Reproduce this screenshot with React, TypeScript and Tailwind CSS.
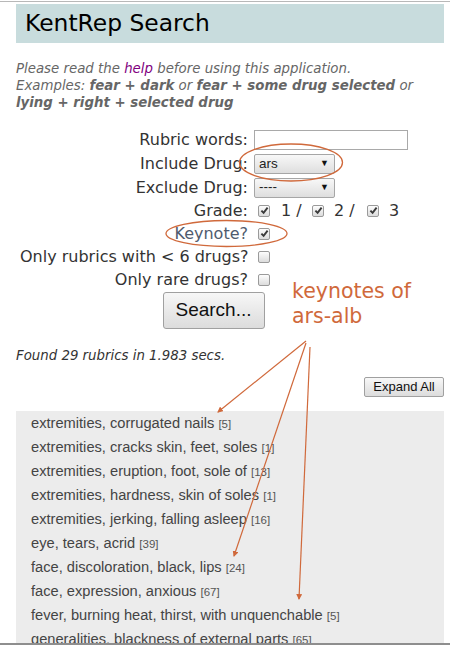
import React from "react";

const CB = ({ checked }: { checked?: boolean }) => (
  <span className="inline-flex w-[12px] h-[12px] shrink-0 items-center justify-center rounded-[2px] border border-[#9a9a9a] bg-linear-to-b from-[#fdfdfd] to-[#dcdcdc]">
    {checked && (
      <svg width="9" height="9" viewBox="0 0 9 9">
        <path d="M1.4 4.6 L3.6 6.9 L7.6 1.6" stroke="#3a3a3a" strokeWidth="1.9" fill="none" />
      </svg>
    )}
  </span>
);

const Select = ({ value }: { value: string }) => (
  <div className="flex h-[20px] w-[81px] items-center justify-between rounded-[2px] border border-[#a6a6a6] bg-linear-to-b from-[#f8f8f8] to-[#dedede] pl-[4px] pr-[5px] text-[13.5px] text-[#222] [font-family:'Liberation_Sans',Arial,sans-serif]">
    <span>{value}</span>
    <span className="text-[9px] text-[#111]">▼</span>
  </div>
);

const items: [string, string][] = [
  ["extremities, corrugated nails", "5"],
  ["extremities, cracks skin, feet, soles", "1"],
  ["extremities, eruption, foot, sole of", "13"],
  ["extremities, hardness, skin of soles", "1"],
  ["extremities, jerking, falling asleep", "16"],
  ["eye, tears, acrid", "39"],
  ["face, discoloration, black, lips", "24"],
  ["face, expression, anxious", "67"],
  ["fever, burning heat, thirst, with unquenchable", "5"],
  ["generalities, blackness of external parts", "65"],
];

export default function App() {
  const orange = "#d0693b";
  return (
    <div className="relative flex h-[646px] w-[450px] flex-col overflow-hidden bg-white [font-family:'DejaVu_Sans',Verdana,sans-serif]">
      <div className="mt-[1px] h-[1px] shrink-0 bg-[#b8b8b8]" />
      <div className="flex-1 overflow-hidden pl-4 pr-[6px] pt-[2px]">
        <div className="h-[39px] bg-[#c8dcdd] pl-[9px] text-[23.4px] leading-[39px] text-black">
          KentRep Search
        </div>
        <p className="mt-[17px] text-[13.33px] italic leading-[17px] text-[#666]">
          Please read the <span className="text-[#800080]">help</span> before using this application.
          <br />
          Examples: <b>fear + dark</b> or <b>fear + some drug selected</b> or <b>lying + right + selected drug</b>
        </p>

        <div className="mt-[17px] text-[16px] text-[#333]">
          <div className="ml-[4px] flex h-[24px] items-center">
            <div className="w-[228px] whitespace-nowrap text-right">Rubric words:</div>
            <div className="ml-[6px] h-[20px] w-[154px] border border-[#a9a9a9] bg-white" />
          </div>
          <div className="ml-[4px] flex h-[24px] items-center">
            <div className="w-[228px] whitespace-nowrap text-right">Include Drug:</div>
            <div className="ml-[6px]">
              <Select value="ars" />
            </div>
          </div>
          <div className="ml-[4px] flex h-[23px] items-center">
            <div className="w-[228px] whitespace-nowrap text-right">Exclude Drug:</div>
            <div className="ml-[6px]">
              <Select value="----" />
            </div>
          </div>
          <div className="ml-[4px] flex h-[23px] items-center">
            <div className="w-[228px] whitespace-nowrap text-right">Grade:</div>
            <div className="ml-[10px] flex items-center">
              <CB checked />
              <span className="ml-[11px] w-[31px]">1 /</span>
              <CB checked />
              <span className="ml-[10px] w-[33px]">2 /</span>
              <CB checked />
              <span className="ml-[10px]">3</span>
            </div>
          </div>
          <div className="ml-[4px] flex h-[23px] items-center">
            <div className="w-[228px] whitespace-nowrap text-right text-[#4f5b6e]">Keynote?</div>
            <div className="ml-[10px] flex items-center">
              <CB checked />
            </div>
          </div>
          <div className="ml-[4px] flex h-[23px] items-center">
            <div className="w-[228px] whitespace-nowrap text-right">Only rubrics with &lt; 6 drugs?</div>
            <div className="ml-[10px] flex items-center">
              <CB />
            </div>
          </div>
          <div className="ml-[4px] flex h-[23px] items-center">
            <div className="w-[228px] whitespace-nowrap text-right">Only rare drugs?</div>
            <div className="ml-[10px] flex items-center">
              <CB />
            </div>
          </div>
          <div className="ml-[4px] mt-[1px] flex w-[387px] justify-center">
            <button className="h-[37px] w-[102px] rounded-[3px] border border-[#a0a0a0] bg-linear-to-b from-[#f7f7f7] to-[#dcdcdc] text-[19px] text-[#111] [font-family:'Liberation_Sans',Arial,sans-serif]">
              Search...
            </button>
          </div>
        </div>

        <p className="mt-[18px] text-[13.33px] italic leading-[17px] text-[#333]">
          Found 29 rubrics in 1.983 secs.
        </p>

        <div className="mt-[13px] flex justify-end">
          <button className="h-[20px] w-[80px] rounded-[2px] border border-[#a0a0a0] bg-linear-to-b from-[#f8f8f8] to-[#dcdcdc] text-[13px] leading-[18px] text-[#111] [font-family:'Liberation_Sans',Arial,sans-serif]">
            Expand All
          </button>
        </div>

        <div className="mt-[14px] bg-[#ececec] pl-[15px] [font-family:'Liberation_Sans',Arial,sans-serif]">
          {items.map(([t, n]) => (
            <div key={t} className="h-[24px] whitespace-nowrap text-[14.67px] leading-[24px] text-[#444]">
              {t} <span className="text-[11.5px] text-[#555]">[{n}]</span>
            </div>
          ))}
        </div>
      </div>
      <div className="h-[2px] shrink-0 bg-[#8e8e8e]" />
      <div className="h-[1px] shrink-0 bg-white" />

      <svg className="pointer-events-none absolute left-0 top-0" width="450" height="646" viewBox="0 0 450 646">
        <defs>
          <marker id="ah" markerWidth="6" markerHeight="6" refX="5" refY="3" orient="auto" markerUnits="userSpaceOnUse">
            <path d="M0 0 L6 3 L0 6 Z" fill={orange} />
          </marker>
        </defs>
        <ellipse cx="291" cy="162.5" rx="51.5" ry="18.5" fill="none" stroke={orange} strokeWidth="1.3" />
        <ellipse cx="226.5" cy="233.5" rx="60.5" ry="13" fill="none" stroke={orange} strokeWidth="1.3" />
        <line x1="306" y1="341" x2="218" y2="412" stroke={orange} strokeWidth="1.2" markerEnd="url(#ah)" />
        <line x1="306" y1="343" x2="234" y2="556" stroke={orange} strokeWidth="1.2" markerEnd="url(#ah)" />
        <line x1="310" y1="347" x2="299" y2="599" stroke={orange} strokeWidth="1.2" markerEnd="url(#ah)" />
      </svg>
      <div className="pointer-events-none absolute left-[292px] top-[279px] text-[20.5px] leading-[25px] text-[#d0693b]">
        keynotes of
        <br />
        ars-alb
      </div>
    </div>
  );
}
